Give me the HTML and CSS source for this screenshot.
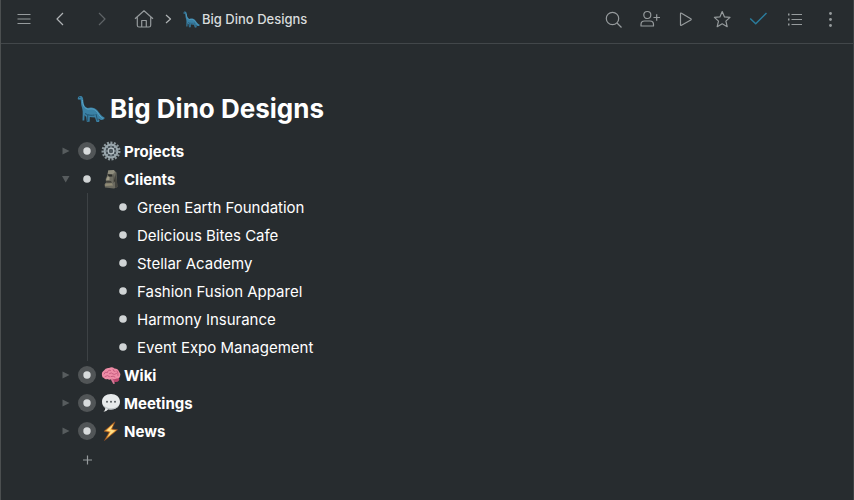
FILE: index.html
```html
<!DOCTYPE html>
<html lang="en">
<head>
    <meta charset="UTF-8">
    <meta name="viewport" content="width=device-width, initial-scale=1.0">
    <title>Big Dino Designs</title>
    <link rel="stylesheet" href="styles.css">
</head>
<body>

<!-- Shared drawings -->
<svg class="sprite" aria-hidden="true">
    <symbol id="dino" viewBox="0 0 28 28">
        <path d="M.8 3.200C1.200 1.400 2.800.6 4.300 1.100C5.800 1.700 6.200 3.500 6.300 5.500C6.400 9 7.500 12 10.500 13C14 11.800 18 12.300 20.500 15.500C22.500 18.300 24.200 21 27.500 22.600C28 24 26.500 25 24 24.900L20.800 23.500L22.600 25.500L22 27H19.500L18 22.500L14.500 22.300L12.800 22L12.600 26.800H9.800L9.200 22L7.600 20.300L7.300 25.500H5.500L5.700 19C6 15.500 5 13 4.300 10.300C3.800 7.500 4.100 5.300 3.300 4.300C2.500 4.800 1.600 4.800.8 4.200Z" fill="#3a81a5"/>
        <path d="M5.400 5C5.400 10 7.500 14 11.500 14.200C15 13.300 18 14 20.500 17.500C22 20 24 22.500 26 23.500" fill="none" stroke="#5aa5c6" stroke-width="1"/>
        <path d="M8 18.500C11 20.500 15 20.500 17.500 20M19 19L20.500 25.500M10.700 20V26" fill="none" stroke="#225572" stroke-width="1"/>
        <circle cx="2.800" cy="2.600" r=".5" fill="#152b38"/>
    </symbol>
    <symbol id="bullet-more" viewBox="0 0 18 18">
        <circle cx="9" cy="9" r="9" fill="#515557"/>
        <circle cx="9" cy="9" r="3.700" fill="#d8dbdc"/>
    </symbol>
    <symbol id="bullet" viewBox="0 0 18 18">
        <circle cx="9" cy="9" r="3.800" fill="#d0d4d5"/>
    </symbol>
</svg>

<header class="topbar">
    <nav class="nav">
        <button class="icon-btn" aria-label="Menu">
            <svg class="icon" viewBox="0 0 20 20"><path d="M3.500 5.500H16.500M3.500 10H16.500M3.500 14.500H16.500"/></svg>
        </button>
        <button class="icon-btn" aria-label="Back">
            <svg class="icon bright" viewBox="0 0 20 20"><path d="M13 4L7 10L13 16"/></svg>
        </button>
        <button class="icon-btn spaced" aria-label="Forward" disabled>
            <svg class="icon" viewBox="0 0 20 20"><path d="M7 4L13 10L7 16"/></svg>
        </button>
        <a class="icon-btn spaced" href="#" aria-label="Home">
            <svg class="icon" viewBox="0 0 20 20"><path d="M1 9.700L10 1.800L19 9.700M3.300 8V16.200Q3.300 18 5 18H15Q16.700 18 16.700 16.200V8M7.700 18V11.500H12.300V18"/></svg>
        </a>
        <svg class="crumb-sep" viewBox="0 0 12 12" aria-hidden="true"><path d="M4 2L8.500 6L4 10"/></svg>
        <a class="crumb" href="#">
            <svg class="crumb-emoji" aria-hidden="true"><use href="#dino"/></svg>
            <span>Big Dino Designs</span>
        </a>
    </nav>

    <div class="actions">
        <button class="icon-btn" aria-label="Search">
            <svg class="icon" viewBox="0 0 20 20"><circle cx="8.500" cy="9.500" r="6.200"/><path d="M13 14L17.500 18.500"/></svg>
        </button>
        <button class="icon-btn" aria-label="Share">
            <svg class="icon" viewBox="0 0 20 20"><circle cx="7.300" cy="6" r="3.500"/><path d="M1 17V15.500Q1 12 4.500 12H10Q13.500 12 13.500 15.500V17ZM13.500 8.500H20M16.700 5.200V11.800"/></svg>
        </button>
        <button class="icon-btn" aria-label="Present">
            <svg class="icon" viewBox="0 0 20 20"><path d="M4.500 4.800V15.700Q4.500 16.800 5.500 16.200L14.800 11Q15.700 10.300 14.800 9.700L5.500 4.200Q4.500 3.700 4.500 4.800Z"/></svg>
        </button>
        <button class="icon-btn" aria-label="Star">
            <svg class="icon" viewBox="0 0 20 20"><path d="M10.200 2.500L12.500 7.900L18 8.400L13.900 12.100L15.200 17.700L10.200 14.800L5.200 17.700L6.500 12.100L2.400 8.400L7.900 7.900Z"/></svg>
        </button>
        <button class="icon-btn" aria-label="Show completed">
            <svg class="icon check" viewBox="0 0 20 20"><path d="M2.200 9.500L7.700 14.800L18.500 4"/></svg>
        </button>
        <button class="icon-btn" aria-label="List view">
            <svg class="icon" viewBox="0 0 20 20"><path d="M7.500 5.500H18M7.500 10.500H18M7.500 15.500H18"/><path class="dots" d="M4 5.500H5.500M4 10.500H5.500M4 15.500H5.500"/></svg>
        </button>
        <button class="icon-btn" aria-label="More">
            <svg class="icon solid" viewBox="0 0 20 20"><circle cx="10.500" cy="4.500" r="1.400"/><circle cx="10.500" cy="10.500" r="1.400"/><circle cx="10.500" cy="16.500" r="1.400"/></svg>
        </button>
    </div>
</header>

<main class="page">
    <h1 class="title">
        <svg class="title-emoji" aria-hidden="true"><use href="#dino"/></svg>
        <span>Big Dino Designs</span>
    </h1>

    <ul class="outline">
        <li>
            <div class="row">
                <button class="toggle" aria-label="Expand Projects"><svg viewBox="0 0 8 8"><path d="M.5.500L7.500 4L.5 7.500Z"/></svg></button>
                <svg class="bullet" aria-hidden="true"><use href="#bullet-more"/></svg>
                <svg class="emoji" viewBox="0 0 20 20" aria-hidden="true">
                    <circle cx="10" cy="10" r="8.300" fill="none" stroke="#8c989d" stroke-width="2.400" stroke-dasharray="2 1.480"/>
                    <circle cx="10" cy="10" r="6.400" fill="none" stroke="#9aa7ad" stroke-width="2.200"/>
                    <circle cx="10" cy="10" r="5.200" fill="#48535a"/>
                    <path d="M10 4V16M4 10H16M5.800 5.800L14.200 14.200M14.200 5.800L5.800 14.200" stroke="#8d9aa1" stroke-width="1"/>
                    <circle cx="10" cy="10" r="2.800" fill="#4b565d" stroke="#b6c1c6" stroke-width="1.200"/>
                </svg>
                <span class="group">Projects</span>
            </div>
        </li>
        <li>
            <div class="row">
                <button class="toggle" aria-label="Collapse Clients"><svg viewBox="0 0 8 8"><path d="M0 1H7.500L3.700 7.500Z"/></svg></button>
                <svg class="bullet" aria-hidden="true"><use href="#bullet"/></svg>
                <svg class="emoji" viewBox="0 0 20 20" aria-hidden="true">
                    <path d="M7.200 1.500L12.800 1L15.500 3.500L15.800 11L16.500 18L13 19.500L4 18.500L3.500 15.500L5 13.500L4.700 10L6 7Z" fill="#6c6b60"/>
                    <path d="M7.200 1.500L12.800 1L14 3L12 5L6.800 5Z" fill="#8f8d7d"/>
                    <path d="M6.500 5.300L11 5.500L11.500 7.500L8 7.800Z" fill="#2b2c28"/>
                    <path d="M6.500 7.500L8.500 7.700L8.500 11L5 11.300Z" fill="#a09c88"/>
                    <path d="M5 12.300H10L11 13.500H5.200ZM12.800 5.500L14 12L12.700 14Z" fill="#35352f"/>
                    <path d="M4.500 14.500L11 14.300L12 16.500L4 17Z" fill="#918c76"/>
                    <path d="M14 4L15.800 11L16.500 18L14 19Z" fill="#45453f"/>
                </svg>
                <span class="group">Clients</span>
            </div>
            <ul class="children">
                <li class="row"><svg class="bullet" aria-hidden="true"><use href="#bullet"/></svg><span>Green Earth Foundation</span></li>
                <li class="row"><svg class="bullet" aria-hidden="true"><use href="#bullet"/></svg><span>Delicious Bites Cafe</span></li>
                <li class="row"><svg class="bullet" aria-hidden="true"><use href="#bullet"/></svg><span>Stellar Academy</span></li>
                <li class="row"><svg class="bullet" aria-hidden="true"><use href="#bullet"/></svg><span>Fashion Fusion Apparel</span></li>
                <li class="row"><svg class="bullet" aria-hidden="true"><use href="#bullet"/></svg><span>Harmony Insurance</span></li>
                <li class="row"><svg class="bullet" aria-hidden="true"><use href="#bullet"/></svg><span>Event Expo Management</span></li>
            </ul>
        </li>
        <li>
            <div class="row">
                <button class="toggle" aria-label="Expand Wiki"><svg viewBox="0 0 8 8"><path d="M.5.500L7.500 4L.5 7.500Z"/></svg></button>
                <svg class="bullet" aria-hidden="true"><use href="#bullet-more"/></svg>
                <svg class="emoji" viewBox="0 0 20 20" aria-hidden="true">
                    <path d="M11 13L16.500 12.500Q19 13 18 15.500Q16 18 12.500 16.500Z" fill="#b9446c"/>
                    <path d="M11.500 13L14 18.500L12.300 19L9 13Z" fill="#d77896"/>
                    <path d="M1 10.500Q.3 7 3 5.500Q4.500 2.500 8 3Q11 1.500 13.500 3.500Q17 3.500 18 6.500Q20 8.500 19 11.500Q18.500 14 15.500 13.500Q13 15 11 13.500Q9 15.500 6.500 14Q4 15 3 13Q1 12.500 1 10.500Z" fill="#ee8ca6"/>
                    <path d="M3 9Q4 6 6.500 7.500Q7 4.500 9.500 5.500M4 11.500Q6.500 9.500 8.500 11.500M8.500 8.500Q10.500 7 12 9Q13.500 10 15.500 8.500M12 4.500Q12 6.500 14 6.500M10 11.500Q12.500 10.500 14 12M16 6Q17.500 8 17 10.500" fill="none" stroke="#bd5277" stroke-width=".8" stroke-linecap="round"/>
                </svg>
                <span class="group">Wiki</span>
            </div>
        </li>
        <li>
            <div class="row">
                <button class="toggle" aria-label="Expand Meetings"><svg viewBox="0 0 8 8"><path d="M.5.500L7.500 4L.5 7.500Z"/></svg></button>
                <svg class="bullet" aria-hidden="true"><use href="#bullet-more"/></svg>
                <svg class="emoji" viewBox="0 0 20 20" aria-hidden="true">
                    <path d="M10 1C15 1 19 4 19 8.800S15 16.500 10 16.500Q8.500 16.500 7.300 16.200Q5.500 18.500 2.500 18.800Q4.500 17 4.300 15Q1 12.800 1 8.800C1 4 5 1 10 1Z" fill="#e7eaeb"/>
                    <path d="M2 12Q5 15 10 15.200T18 12Q16 16.300 10 16.500Q4 16.300 2 12Z" fill="#bfc5c8"/>
                    <circle cx="6" cy="8.800" r="1" fill="#555b5f"/><circle cx="10" cy="8.800" r="1" fill="#555b5f"/><circle cx="14" cy="8.800" r="1" fill="#555b5f"/>
                </svg>
                <span class="group">Meetings</span>
            </div>
        </li>
        <li>
            <div class="row">
                <button class="toggle" aria-label="Expand News"><svg viewBox="0 0 8 8"><path d="M.5.500L7.500 4L.5 7.500Z"/></svg></button>
                <svg class="bullet" aria-hidden="true"><use href="#bullet-more"/></svg>
                <svg class="emoji" viewBox="0 0 20 20" aria-hidden="true">
                    <path d="M14 .8L3 10.300L8.200 11.200L3.500 19.500L16.500 8.800L10.800 8Z" fill="#f3a93b" stroke="#8e4a24" stroke-width=".7"/>
                    <path d="M12.200 3.500L5.500 9.600L9.800 10.500L7 15.500L14.200 9.400L9.300 8.700Z" fill="#ffdf8a"/>
                </svg>
                <span class="group">News</span>
            </div>
        </li>
    </ul>

    <button class="add" aria-label="Add item">
        <svg viewBox="0 0 10 10"><path d="M5.500 .5V9.500M1 5H10"/></svg>
    </button>
</main>

</body>
</html>
```

FILE: styles.css
```css
* {
    box-sizing: border-box;
}
body {
    margin: 0;
    min-height: 100vh;
    background-color: #272c2f;
    border-left: 1px solid #4b4f50;
    border-right: 1px solid #3c4143;
    color: #fff;
    font-family: Inter, "Liberation Sans", sans-serif;
    font-size: 15px;
}
button {
    padding: 0;
    border: none;
    background: none;
    cursor: pointer;
}
svg {
    display: block;
    flex-shrink: 0;
}
ul {
    margin: 0;
    padding: 0;
    list-style: none;
}
.sprite {
    display: none;
}

/* Top bar */
.topbar {
    display: flex;
    justify-content: space-between;
    height: 44px;
    padding: 0 5px 5px;
    border-bottom: 1px solid #42474a;
}
.nav,
.actions {
    display: flex;
    align-items: center;
}
.icon-btn {
    display: flex;
    align-items: center;
    justify-content: center;
    width: 36px;
    height: 36px;
}
.icon-btn:disabled {
    opacity: 0.5;
}
.spaced {
    margin-left: 6px;
}
.icon,
.crumb-sep,
.add svg {
    fill: none;
    stroke: #969b9d;
    stroke-width: 1.2;
    stroke-linejoin: round;
}
.icon {
    width: 20px;
    height: 20px;
}
.bright {
    stroke: #b0b4b6;
}
.check {
    stroke: #2b7c9c;
    stroke-width: 1.5;
}
.dots {
    stroke-width: 2;
}
.solid {
    fill: #969b9d;
    stroke: none;
}
.crumb-sep {
    width: 12px;
    height: 12px;
    stroke: #b0b4b6;
}
.crumb {
    display: flex;
    align-items: center;
    gap: 2px;
    margin-left: 9px;
    color: #d9dcdd;
    font-size: 13px;
    font-weight: 500;
    text-decoration: none;
}
.crumb-emoji {
    width: 17px;
    height: 17px;
}

/* Document */
.page {
    padding: 47px 57px 24px;
}
.title {
    display: flex;
    align-items: center;
    gap: 5px;
    margin: 0 0 10px 19px;
    font-size: 26px;
    line-height: 36px;
    font-weight: 700;
}
.title-emoji {
    width: 28px;
    height: 28px;
}
.row {
    display: flex;
    align-items: center;
    height: 28px;
}
.toggle {
    display: flex;
    justify-content: center;
    width: 16px;
    margin-right: 4px;
}
.toggle svg {
    width: 8px;
    height: 8px;
    fill: #575c5e;
}
.bullet {
    width: 18px;
    height: 18px;
    margin-right: 5px;
}
.emoji {
    width: 20px;
    height: 20px;
    margin-right: 3px;
}
.group {
    font-weight: 700;
}
.children {
    margin-left: 29px;
    padding-left: 26px;
    border-left: 1px solid #3d4245;
}
.add {
    display: flex;
    align-items: center;
    justify-content: center;
    width: 18px;
    height: 30px;
    margin-left: 20px;
}
.add svg {
    width: 10px;
    height: 10px;
}
```
